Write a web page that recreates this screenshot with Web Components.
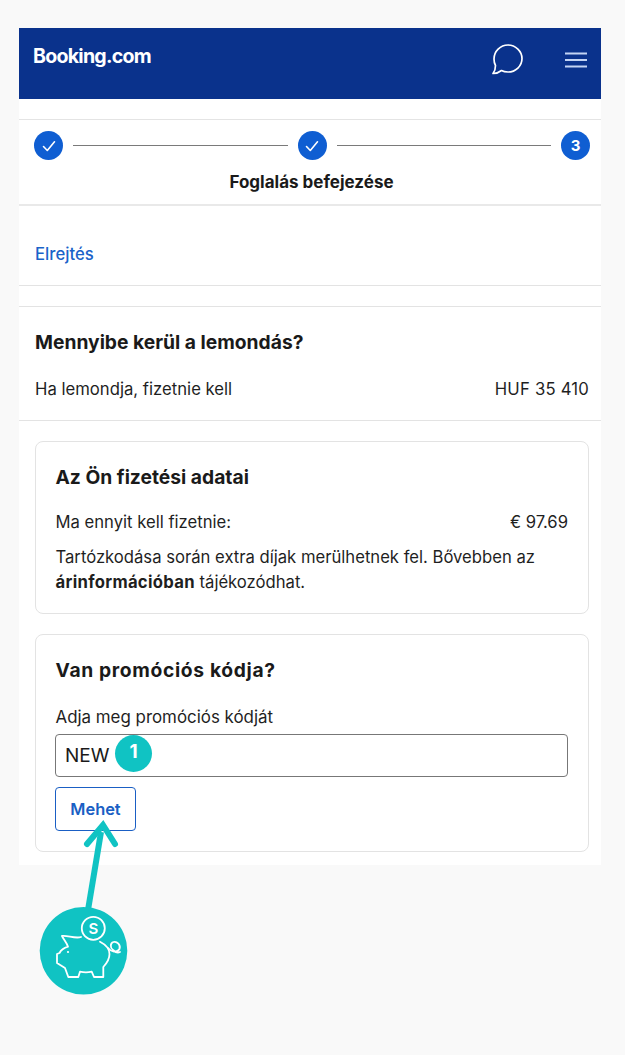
<!DOCTYPE html>
<html lang="hu">
<head>
<meta charset="utf-8">
<title>Booking.com</title>
<style>
  html, body { margin: 0; height: 100%; }
  body {
    background: #f9f9f9;
    font-family: Inter, "Liberation Sans", sans-serif;
    color: #1a1a1a;
    -webkit-font-smoothing: antialiased;
  }
</style>
</head>
<body>
<booking-page>
  <top-bar></top-bar>
  <step-bar label="Foglalás befejezése"></step-bar>
  <hide-link>Elrejtés</hide-link>
  <cancel-cost title="Mennyibe kerül a lemondás?" label="Ha lemondja, fizetnie kell" amount="HUF 35 410"></cancel-cost>
  <info-card title="Az Ön fizetési adatai">
    <div style="display:flex;justify-content:space-between;line-height:22px;margin-bottom:12px"><span>Ma ennyit kell fizetnie:</span><span>€ 97.69</span></div>
    <div style="line-height:25px">Tartózkodása során extra díjak merülhetnek fel. Bővebben az <b style="font-weight:700;letter-spacing:.3px">árinformációban</b> tájékozódhat.</div>
  </info-card>
  <promo-card title="Van promóciós kódja?" label="Adja meg promóciós kódját" code="NEW" action="Mehet"></promo-card>
  <guide-overlay></guide-overlay>
</booking-page>

<script>
class BookingPage extends HTMLElement {
  connectedCallback() {
    this.attachShadow({ mode: 'open' });
    this.shadowRoot.innerHTML = `
      <style>
        :host { display: block; position: relative; min-height: 1055px; padding: 28px 24px 0 19px; box-sizing: border-box; }
        .panel { background: #fff; height: 837px; }
      </style>
      <div class="panel"><slot></slot></div>
    `;
  }
}

class TopBar extends HTMLElement {
  connectedCallback() {
    this.attachShadow({ mode: 'open' });
    this.shadowRoot.innerHTML = `
      <style>
        :host { display: block; height: 91px; box-sizing: border-box; border-bottom: 20px solid #fff; }
        .bar { background: #0a328c; height: 71px; display: flex; align-items: flex-start; color: #fff; }
        .logo { font: 700 19.6px/1 Inter, "Liberation Sans", sans-serif; letter-spacing: -0.75px; margin: 19px 0 0 14px; flex: 1; }
        svg { display: block; }
        .chat { margin: 15px 0 0 0; }
        .menu { margin: 24px 14px 0 41px; }
      </style>
      <div class="bar">
        <span class="logo">Booking.com</span>
        <svg class="chat" width="34" height="33" viewBox="0 0 34 33" fill="none" stroke="#fff" stroke-width="1.7" stroke-linejoin="round">
          <path d="M3 30.5C5 28 5.5 25 5.5 22.5C4.4 20.5 4 18.3 4 16C4 8.3 10.3 2 18 2C25.7 2 32 8.3 32 15.5C32 23 25.7 29 18 29C15.5 29 13.3 28.5 11.5 27.5C9 29.5 6 30.5 3 30.5Z"/>
        </svg>
        <svg class="menu" width="22" height="16" viewBox="0 0 22 16" fill="none" stroke="#c3d4f4" stroke-width="2">
          <path d="M0 1.5H22M0 8H22M0 14.5H22"/>
        </svg>
      </div>
    `;
  }
}

class StepBar extends HTMLElement {
  connectedCallback() {
    const check = `<svg width="16" height="16" viewBox="0 0 16 16" fill="none" stroke="#fff" stroke-width="1.6" stroke-linecap="round" stroke-linejoin="round"><path d="M2.5 8.5L6.3 12.5L13.5 3.8"/></svg>`;
    this.attachShadow({ mode: 'open' });
    this.shadowRoot.innerHTML = `
      <style>
        :host { display: block; height: 87px; box-sizing: border-box; border-top: 1px solid #e4e4e4; border-bottom: 2px solid #e9e9e9; padding: 11px 11px 0 15px; }
        .row { display: flex; align-items: center; }
        .dot { width: 29px; height: 29px; border-radius: 50%; background: #0f5ed2; color: #fff; display: flex; align-items: center; justify-content: center; font: 700 15px Inter, "Liberation Sans", sans-serif; flex: none; }
        .line { flex: 1; height: 1px; background: #7a7a7a; margin: 0 10px 0 10px; }
        .label { text-align: center; font: 700 17px/20px Inter, "Liberation Sans", sans-serif; margin: 12px 0 0 -1px; color: #1a1a1a; }
      </style>
      <div class="row">
        <span class="dot">${check}</span><span class="line"></span>
        <span class="dot">${check}</span><span class="line"></span>
        <span class="dot">3</span>
      </div>
      <div class="label">${this.getAttribute('label')}</div>
    `;
  }
}

class HideLink extends HTMLElement {
  connectedCallback() {
    this.attachShadow({ mode: 'open' });
    this.shadowRoot.innerHTML = `
      <style>
        :host { display: block; box-sizing: border-box; height: 100px; padding-top: 37px; background: #fff; position: relative; font-size: 0; }
        a { font: 500 16.7px/22px Inter, "Liberation Sans", sans-serif; color: #1a63c9; margin-left: 16px; }
        .rule { height: 1px; background: #e3e3e3; }
        .one { margin-top: 20px; }
        .two { margin-top: 20px; }
      </style>
      <a><slot></slot></a>
      <div class="rule one"></div>
      <div class="rule two"></div>
    `;
  }
}

class CancelCost extends HTMLElement {
  connectedCallback() {
    this.attachShadow({ mode: 'open' });
    this.shadowRoot.innerHTML = `
      <style>
        :host { display: block; box-sizing: border-box; height: 115px; border-bottom: 1px solid #e3e3e3; padding: 24px 12px 0 16px; font-size: 16.7px; }
        h2 { margin: 0 0 24px; font: 700 19.25px/24px Inter, "Liberation Sans", sans-serif; color: #1a1a1a; }
        .row { display: flex; justify-content: space-between; line-height: 22px; color: #1f1f1f; }
        .row span:last-child { letter-spacing: .2px; }
      </style>
      <h2>${this.getAttribute('title')}</h2>
      <div class="row"><span>${this.getAttribute('label')}</span><span>${this.getAttribute('amount')}</span></div>
    `;
  }
}

class InfoCard extends HTMLElement {
  connectedCallback() {
    this.attachShadow({ mode: 'open' });
    this.shadowRoot.innerHTML = `
      <style>
        :host { display: block; box-sizing: border-box; height: 173px; margin: 20px 12px 0 16px; border: 1px solid #e3e3e3; border-radius: 8px; padding: 23px 20px 0 19.5px; font-size: 16.65px; color: #1f1f1f; }
        h2 { margin: 0 0 22px; font: 700 19.25px/24px Inter, "Liberation Sans", sans-serif; color: #1a1a1a; }
      </style>
      <h2>${this.getAttribute('title')}</h2>
      <slot></slot>
    `;
  }
}

class PromoCard extends HTMLElement {
  connectedCallback() {
    this.attachShadow({ mode: 'open' });
    this.shadowRoot.innerHTML = `
      <style>
        :host { display: block; box-sizing: border-box; height: 218px; margin: 20px 12px 0 16px; border: 1px solid #e3e3e3; border-radius: 8px; padding: 23px 20px 0 19.5px; font-size: 16.9px; color: #1f1f1f; }
        h2 { margin: 0 0 24px; font: 700 19.25px/24px Inter, "Liberation Sans", sans-serif; letter-spacing: 0.65px; color: #1a1a1a; }
        label { display: block; line-height: 22px; margin-bottom: 6px; }
        .field { box-sizing: border-box; height: 43px; margin-left: -0.5px; border: 1px solid #777; border-radius: 4px; padding: 0 9px; font-size: 19px; line-height: 41px; color: #1a1a1a; }
        button { display: block; box-sizing: border-box; margin: 10px 0 0 -0.5px; width: 81px; height: 44px; background: #fff; border: 1px solid #1a5fc4; border-radius: 4px; color: #1a5fc4; font: 600 16.4px Inter, "Liberation Sans", sans-serif; padding: 0; }
      </style>
      <h2>${this.getAttribute('title')}</h2>
      <label>${this.getAttribute('label')}</label>
      <div class="field">${this.getAttribute('code')}</div>
      <button type="button">${this.getAttribute('action')}</button>
    `;
  }
}

// annotation layer drawn over the screenshot: number badge, arrow and piggy bank
class GuideOverlay extends HTMLElement {
  connectedCallback() {
    this.attachShadow({ mode: 'open' });
    this.shadowRoot.innerHTML = `
      <style>
        :host { display: block; position: absolute; inset: 0; pointer-events: none; }
        .badge { position: absolute; left: 115px; top: 735px; width: 37px; height: 37px; border-radius: 50%; background: #10c3c3; color: #fff; display: flex; align-items: center; justify-content: center; font: 700 19px/1 Inter, "Liberation Sans", sans-serif; padding-bottom: 4px; box-sizing: border-box; }
        svg { position: absolute; left: 0; top: 0; }
      </style>
      <span class="badge">1</span>
      <svg width="625" height="1055" viewBox="0 0 625 1055" fill="none">
        <path d="M88 910L101 832" stroke="#10c3c3" stroke-width="6"/>
        <path d="M87 844L103 825L115 844" stroke="#10c3c3" stroke-width="6" stroke-linecap="round"/>
        <circle cx="83.5" cy="950.7" r="43.8" fill="#10c3c3"/>
        <g stroke="#fff" stroke-width="1.8" stroke-linecap="round" stroke-linejoin="round">
          <circle cx="93.3" cy="928.3" r="11.5"/>
          <path d="M81 937C75 939 67 935 62 936C64 940 67 943 68 946.7C64 948 61 950 59.5 953L57 954V963L65 968L68.3 977H78.3L80 971.7C84 972.5 88 972.5 91.7 971.7L94 977H103.3V967C107 963 109.5 959 109.5 954C109.5 949 105.5 944.5 100 941.7"/>
          <path d="M108 948C111 952 117 953 119.5 949C121 945 117 941 113.5 942C110 943 110 948 113 950C115 952 118 953 120 952"/>
        </g>
        <circle cx="68" cy="952" r="1.1" fill="#fff"/>
        <text x="93.3" y="933.6" text-anchor="middle" font-family="Inter, 'Liberation Sans', sans-serif" font-weight="600" font-size="15" fill="#fff">S</text>
      </svg>
    `;
  }
}

customElements.define('booking-page', BookingPage);
customElements.define('top-bar', TopBar);
customElements.define('step-bar', StepBar);
customElements.define('hide-link', HideLink);
customElements.define('cancel-cost', CancelCost);
customElements.define('info-card', InfoCard);
customElements.define('promo-card', PromoCard);
customElements.define('guide-overlay', GuideOverlay);
</script>
</body>
</html>
